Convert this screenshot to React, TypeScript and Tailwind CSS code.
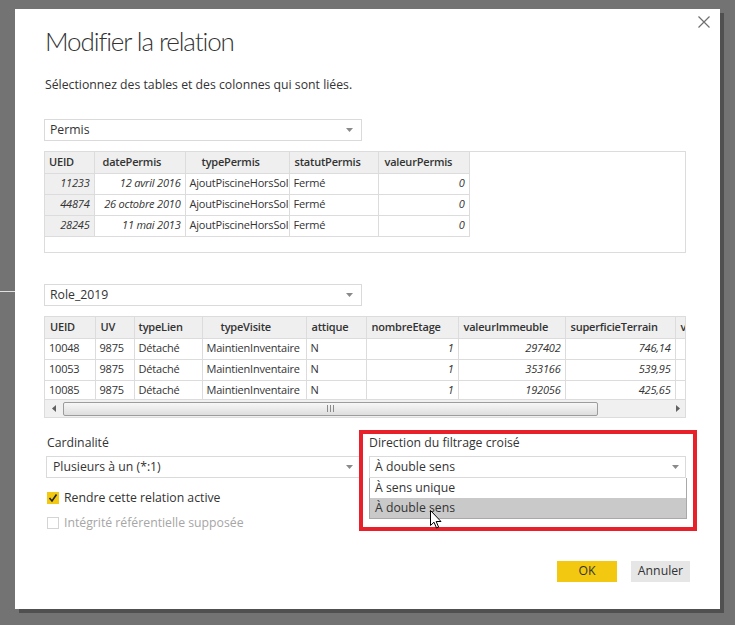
import React from "react";

const font = { fontFamily: '"Open Sans", "Noto Sans", Arial, sans-serif' };

type Col = { name: string; w: number; hp: number };
type Cell = { v: string; right?: boolean; italic?: boolean };

const permisCols: Col[] = [
  { name: "UEID", w: 49, hp: 4 },
  { name: "datePermis", w: 91, hp: 8 },
  { name: "typePermis", w: 104, hp: 16 },
  { name: "statutPermis", w: 89, hp: 5 },
  { name: "valeurPermis", w: 91, hp: 6 },
];

const permisRows: Cell[][] = [
  [
    { v: "11233", right: true, italic: true },
    { v: "12 avril 2016", right: true, italic: true },
    { v: "AjoutPiscineHorsSol" },
    { v: "Fermé" },
    { v: "0", right: true, italic: true },
  ],
  [
    { v: "44874", right: true, italic: true },
    { v: "26 octobre 2010", right: true, italic: true },
    { v: "AjoutPiscineHorsSol" },
    { v: "Fermé" },
    { v: "0", right: true, italic: true },
  ],
  [
    { v: "28245", right: true, italic: true },
    { v: "11 mai 2013", right: true, italic: true },
    { v: "AjoutPiscineHorsSol" },
    { v: "Fermé" },
    { v: "0", right: true, italic: true },
  ],
];

// last column is cut by the grid edge, only its first letter shows
const roleCols: Col[] = [
  { name: "UEID", w: 50, hp: 5 },
  { name: "UV", w: 39, hp: 5 },
  { name: "typeLien", w: 68, hp: 4 },
  { name: "typeVisite", w: 104, hp: 18 },
  { name: "attique", w: 60, hp: 5 },
  { name: "nombreEtage", w: 92, hp: 5 },
  { name: "valeurImmeuble", w: 107, hp: 5 },
  { name: "superficieTerrain", w: 110, hp: 5 },
  { name: "v", w: 12, hp: 5 },
];

const roleData = [
  ["10048", "297402", "746,14"],
  ["10053", "353166", "539,95"],
  ["10085", "192056", "425,65"],
];

const roleRows: Cell[][] = roleData.map(([id, val, sup]) => [
  { v: id },
  { v: "9875" },
  { v: "Détaché" },
  { v: "MaintienInventaire" },
  { v: "N" },
  { v: "1", right: true, italic: true },
  { v: val, right: true, italic: true },
  { v: sup, right: true, italic: true },
  { v: "", right: true, italic: true },
]);

function Arrow() {
  return (
    <svg width="7" height="4" viewBox="0 0 7 4">
      <path d="M0 0 L7 0 L3.5 4 Z" fill="#8a8a8a" />
    </svg>
  );
}

function Select({ value, className }: { value: string; className: string }) {
  return (
    <div
      className={`h-[22px] border border-[#dadada] bg-white flex items-center justify-between text-[12.25px] text-[#333] ${className}`}
    >
      <span>{value}</span>
      <Arrow />
    </div>
  );
}

function DataTable({
  cols,
  rows,
  grayFirst,
}: {
  cols: Col[];
  rows: Cell[][];
  grayFirst: boolean;
}) {
  const total = cols.reduce((s, c) => s + c.w, 0);
  return (
    <table
      className="border-collapse table-fixed text-[11px] tracking-[-0.2px] text-[#333]"
      style={{ width: total }}
    >
      <colgroup>
        {cols.map((c) => (
          <col key={c.name} style={{ width: c.w }} />
        ))}
      </colgroup>
      <thead>
        <tr className="h-[21px]">
          {cols.map((c, i) => (
            <th
              key={c.name}
              className={`bg-[#efefef] border border-[#dcdcdc] border-t-0 font-semibold text-left whitespace-nowrap overflow-hidden p-0 ${
                i === 0 ? "border-l-0" : ""
              }`}
            >
              <div style={{ paddingLeft: c.hp }}>{c.name}</div>
            </th>
          ))}
        </tr>
      </thead>
      <tbody>
        {rows.map((r, ri) => (
          <tr key={ri} className="h-[21px]">
            {r.map((cell, ci) => (
              <td
                key={ci}
                className={`border border-[#dcdcdc] whitespace-nowrap overflow-hidden p-0 ${
                  ci === 0 ? "border-l-0" : ""
                } ${ci === 0 && grayFirst ? "bg-[#efefef]" : "bg-white"} ${
                  cell.right ? "text-right pr-[4px]" : "text-left pl-[4px]"
                } ${cell.italic ? "italic" : ""}`}
              >
                {cell.v}
              </td>
            ))}
          </tr>
        ))}
      </tbody>
    </table>
  );
}

function ScrollBar() {
  return (
    <div className="h-[18px] flex items-center bg-[#f0f0f0] border-t border-[#dcdcdc]">
      <div className="w-[18px] flex justify-center">
        <svg width="4" height="7" viewBox="0 0 4 7">
          <path d="M4 0 L4 7 L0 3.5 Z" fill="#606060" />
        </svg>
      </div>
      <div className="w-[535px] h-[14px] rounded-[2px] border border-[#9c9c9c] bg-gradient-to-b from-[#f7f7f7] to-[#dedede] flex items-center justify-center gap-[2px]">
        <div className="w-px h-[7px] bg-[#8a8a8a]" />
        <div className="w-px h-[7px] bg-[#8a8a8a]" />
        <div className="w-px h-[7px] bg-[#8a8a8a]" />
      </div>
      <div className="flex-1" />
      <div className="w-[14px] flex justify-center">
        <svg width="4" height="7" viewBox="0 0 4 7">
          <path d="M0 0 L0 7 L4 3.5 Z" fill="#606060" />
        </svg>
      </div>
    </div>
  );
}

function Cursor() {
  return (
    <svg width="12" height="19" viewBox="0 0 12 19">
      <path
        d="M0.5 0.5 L0.5 15.5 L4 12.2 L6.5 18 L8.6 17.1 L6.2 11.5 L11 11.5 Z"
        fill="white"
        stroke="black"
        strokeWidth="1"
        strokeLinejoin="round"
      />
    </svg>
  );
}

export default function App() {
  return (
    <div
      className="relative w-[735px] h-[625px] bg-[#737373] overflow-hidden pt-[9px] pl-[15px]"
      style={font}
    >
      <div className="absolute left-0 top-[291px] w-[15px] h-px bg-[#e0e0e0]" />
      <div className="w-[705px] h-[600px] bg-white shadow-[4px_4px_0_0_#505050] flex flex-col pt-[16px] pl-[29px] pr-[34px]">
        <div className="flex justify-between items-start">
          <h1
            className="text-[26px] leading-[32px] font-light text-[#333] ml-[1px] tracking-[-1.1px]"
            style={{ fontFamily: 'Lato, "Open Sans", sans-serif' }}
          >
            Modifier la relation
          </h1>
          <svg
            width="12"
            height="12"
            viewBox="0 0 12 12"
            className="-mt-[9px] -mr-[24px]"
          >
            <path d="M0.5 0.5 L11.5 11.5 M11.5 0.5 L0.5 11.5" stroke="#6f6f6f" strokeWidth="1.2" />
          </svg>
        </div>
        <p className="mt-[19px] text-[12.25px] leading-[18px] text-[#333] ml-[1px]">
          Sélectionnez des tables et des colonnes qui sont liées.
        </p>

        <Select value="Permis" className="mt-[25px] w-[318px] pl-[5px] pr-[8px]" />
        <div className="mt-[10px] h-[102px] border border-[#dcdcdc] overflow-hidden">
          <DataTable cols={permisCols} rows={permisRows} grayFirst={true} />
        </div>

        <Select value="Role_2019" className="mt-[31px] w-[318px] pl-[5px] pr-[8px]" />
        <div className="mt-[10px] h-[102px] border border-[#dcdcdc] overflow-hidden flex flex-col">
          <div className="overflow-hidden">
            <DataTable cols={roleCols} rows={roleRows} grayFirst={false} />
          </div>
          <ScrollBar />
        </div>

        <div className="mt-[12px] flex text-[12.25px] text-[#333]">
          <div className="w-[315px] pt-[5px] flex flex-col">
            <div className="leading-[16px] pl-[3px]">Cardinalité</div>
            <Select
              value="Plusieurs à un (*:1)"
              className="mt-[5px] ml-[2px] w-[314px] pl-[6px] pr-[6px]"
            />
            <div className="mt-[12px] h-[16px] flex items-center gap-[5px] pl-[3px]">
              <div className="w-[12px] h-[12px] bg-[#f2c811] flex items-center justify-center">
                <svg width="10" height="10" viewBox="0 0 10 10">
                  <path d="M1.5 5 L4 8 L8.5 1.5" fill="none" stroke="#222" strokeWidth="1.6" />
                </svg>
              </div>
              <span>Rendre cette relation active</span>
            </div>
            <div className="mt-[9px] h-[16px] flex items-center gap-[5px] pl-[3px] text-[#a6a6a6]">
              <div className="w-[12px] h-[12px] border border-[#d4d4d4] bg-white" />
              <span>Intégrité référentielle supposée</span>
            </div>
          </div>

          <div className="relative w-[338px] border-4 border-[#e8202a] pl-[6px] pr-[7px] pt-[1px] pb-[7px] flex flex-col">
            <div className="leading-[16px]">Direction du filtrage croisé</div>
            <Select value="À double sens" className="mt-[5px] w-[317px] pl-[5px] pr-[6px]" />
            <div className="w-[318px] border border-[#a9a9a9] border-t-0">
              <div className="h-[20px] bg-white flex items-center pl-[5px]">À sens unique</div>
              <div className="h-[20px] bg-[#c9c9c9] flex items-center pl-[5px]">À double sens</div>
            </div>
            <div className="absolute left-[67px] top-[76px]">
              <Cursor />
            </div>
          </div>
        </div>

        <div className="mt-[30px] flex justify-end gap-[14px] -mr-[4px] text-[12.25px] text-[#333]">
          <button className="w-[60px] h-[21px] bg-[#f2c811] flex items-center justify-center">OK</button>
          <button className="w-[59px] h-[21px] bg-[#e6e6e6] flex items-center justify-center">Annuler</button>
        </div>
      </div>
    </div>
  );
}
